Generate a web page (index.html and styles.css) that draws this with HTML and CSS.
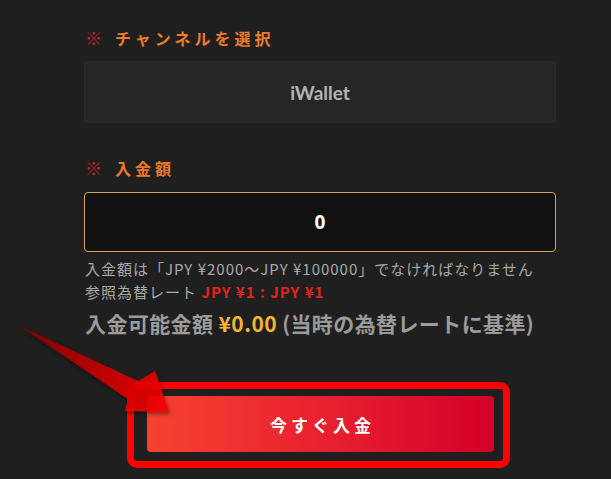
FILE: index.html
```html
<!DOCTYPE html>
<html lang="ja">
<head>
    <meta charset="UTF-8">
    <meta name="viewport" content="width=device-width, initial-scale=1.0">
    <title>入金</title>
    <link rel="stylesheet" href="styles.css">
</head>
<body>
    <div class="deposit-form">
        <div class="field-label"><span class="mark">※</span>チャンネルを選択</div>
        <div class="channel-box">iWallet</div>

        <div class="field-label label-amount"><span class="mark">※</span>入金額</div>
        <div class="amount-input">0</div>

        <p class="hint">入金額は「JPY ¥2000～JPY ¥100000」でなければなりません</p>
        <p class="hint">参照為替レート <span class="rate">JPY ¥1 : JPY ¥1</span></p>
        <p class="available">入金可能金額 <span class="money">¥0.00</span> (当時の為替レートに基準)</p>

        <div class="highlight">
            <button class="btn-deposit">今すぐ入金</button>
        </div>
    </div>

    <!-- annotation arrow -->
    <svg class="arrow" width="611" height="479" viewBox="0 0 611 479">
        <defs>
            <linearGradient id="arrowFill" x1="18" y1="325" x2="168" y2="412" gradientUnits="userSpaceOnUse">
                <stop offset="0" stop-color="#7a0000"/>
                <stop offset="0.6" stop-color="#cc0000"/>
                <stop offset="1" stop-color="#f20000"/>
            </linearGradient>
            <filter id="arrowShadow" x="-20%" y="-20%" width="140%" height="140%">
                <feDropShadow dx="1" dy="2" stdDeviation="2" flood-color="#000" flood-opacity="0.5"/>
            </filter>
        </defs>
        <polygon points="18,325 138,381 155,371 169,412 125,411 128,399" fill="url(#arrowFill)" opacity="0.93" filter="url(#arrowShadow)"/>
    </svg>
</body>
</html>
```

FILE: styles.css
```css
:root {
    --bg: #1f1f1f;
    --label: #ea7a2c;
    --mark: #c8232b;
    --muted: #a9a9a9;
}

* {
    margin: 0;
    padding: 0;
    box-sizing: border-box;
}

body {
    background: var(--bg);
    font-family: "Noto Sans CJK JP", "Noto Sans", sans-serif;
    color: var(--muted);
    width: 611px;
    height: 479px;
    overflow: hidden;
    position: relative;
}

.deposit-form {
    width: 472px;
    margin-left: 84px;
    padding-top: 26px;
    display: flex;
    flex-direction: column;
}

.field-label {
    font-size: 16px;
    line-height: 24px;
    font-weight: 700;
    color: var(--label);
    letter-spacing: 4px;
    padding-left: 1px;
    margin-bottom: 11px;
}

.field-label .mark {
    color: var(--mark);
    font-size: 17px;
    margin-right: 9px;
}

.label-amount {
    margin-top: 33px;
    margin-bottom: 12px;
}

.channel-box {
    height: 62px;
    background: #262626;
    border: 1px solid #2b2b2b;
    border-radius: 2px;
    display: flex;
    align-items: center;
    justify-content: center;
    font-family: "Lato", "Noto Sans", sans-serif;
    font-size: 19px;
    font-weight: 700;
    color: #b5b5b5;
}

.amount-input {
    height: 60px;
    background: #111;
    border: 1px solid #d9a355;
    border-radius: 4px;
    display: flex;
    align-items: center;
    justify-content: center;
    font-family: "Noto Sans", sans-serif;
    font-size: 19px;
    font-weight: 700;
    color: #fff;
}

.hint {
    font-size: 15px;
    line-height: 23px;
    letter-spacing: 1px;
    color: var(--muted);
    padding-left: 1px;
}

.amount-input + .hint {
    margin-top: 5px;
}

.rate {
    color: #e3231c;
    font-weight: 700;
}

.available {
    font-size: 21px;
    line-height: 28px;
    letter-spacing: 0.4px;
    font-weight: 700;
    color: #9b9b9b;
    margin-top: 6px;
    padding-left: 1px;
}

.money {
    color: #f4b632;
}

.highlight {
    margin-top: 45px;
    margin-left: 43px;
    width: 383px;
    height: 86px;
    border: 7px solid #ff0000;
    border-radius: 10px;
    padding: 7px 9px 9px 13px;
}

.btn-deposit {
    width: 100%;
    height: 56px;
    border: none;
    border-radius: 4px;
    background: linear-gradient(90deg, #f6422f 0%, #e8212f 50%, #d30027 100%);
    color: #fff;
    font-family: "Noto Sans CJK JP", sans-serif;
    font-size: 17px;
    font-weight: 700;
    letter-spacing: 4px;
    text-indent: 4px;
}

.arrow {
    position: absolute;
    left: 0;
    top: 0;
    pointer-events: none;
}
```
